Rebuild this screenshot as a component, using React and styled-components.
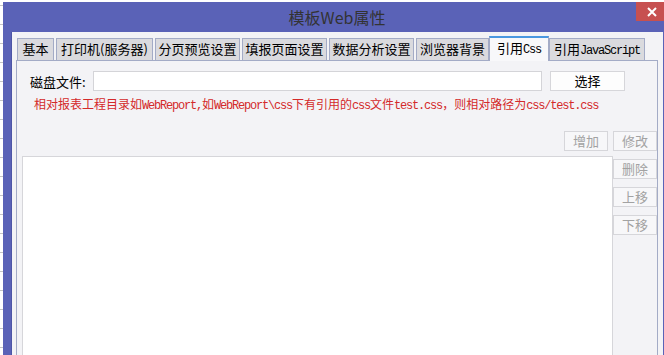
import styled, { createGlobalStyle } from 'styled-components'

const GlobalStyle = createGlobalStyle`
  html, body {
    margin: 0;
    padding: 0;
  }
  body {
    width: 664px;
    height: 355px;
    overflow: hidden;
    background: #ffffff;
    font-family: 'Noto Sans CJK SC', 'Noto Sans', sans-serif;
  }
`

const Desktop = styled.div`
  width: 664px;
  height: 355px;
  overflow: hidden;
  box-sizing: border-box;
  padding: 2px 0 0 3px;
  background: repeating-linear-gradient(
    to bottom,
    transparent 0 5px,
    #c4c4c4 5px 6px,
    transparent 6px 19px
  );
`

const Window = styled.div`
  position: relative;
  width: 668px;
  height: 370px;
  display: flex;
  flex-direction: column;
  background: #5a62b7;
`

const TitleBar = styled.div`
  height: 30px;
  line-height: 30px;
  text-align: center;
  font-size: 16px;
  color: #333;
`

const CloseButton = styled.div`
  position: absolute;
  top: 0;
  right: 4px;
  width: 31px;
  height: 19px;
  display: flex;
  align-items: center;
  justify-content: center;
  background: #c75050;
`

const Body = styled.div`
  flex: 1;
  margin: 0 8px;
  box-sizing: border-box;
  padding: 4px 5px 0 4px;
  background: #f3f3f6;
  border-left: 1px solid #4d55a6;
  display: flex;
  flex-direction: column;
`

const TabStrip = styled.div`
  height: 24px;
  display: flex;
  align-items: flex-end;
  padding-left: 1px;
`

const Tab = styled.div`
  position: relative;
  box-sizing: border-box;
  width: ${(p) => p.$w}px;
  height: ${(p) => (p.$active ? 25 : 22)}px;
  margin: ${(p) => (p.$active ? '0 0 -1px -2px' : '0 2px 0 0')};
  z-index: ${(p) => (p.$active ? 1 : 0)};
  border: 1px solid #a3abc6;
  border-bottom: none;
  border-top: ${(p) => (p.$active ? '2px solid #4a98e0' : '1px solid #a3abc6')};
  background: ${(p) => (p.$active ? '#f8f8fa' : '#dadade')};
  font-size: 13px;
  line-height: 20px;
  text-align: center;
  color: #000;
  white-space: nowrap;
`

const Mono = styled.span`
  font-family: 'Liberation Mono', 'Noto Sans CJK SC', monospace;
  font-size: 12px;
  letter-spacing: -1.2px;
`

const Panel = styled.div`
  flex: 1;
  box-sizing: border-box;
  border: 1px solid #a3abc6;
  padding: 10px 0 0 5px;
  background: #f3f3f6;
`

const FileRow = styled.div`
  display: flex;
  align-items: center;
  padding-left: 8px;
  height: 20px;
`

const Label = styled.span`
  width: 63px;
  font-size: 13px;
  color: #000;
`

const Input = styled.div`
  width: 449px;
  height: 20px;
  box-sizing: border-box;
  border: 1px solid #d4d4d8;
  background: #fff;
`

const Button = styled.div`
  box-sizing: border-box;
  width: ${(p) => p.$w || 44}px;
  height: 20px;
  margin-left: ${(p) => p.$ml || 0}px;
  border: 1px solid #d6d6da;
  background: ${(p) => (p.$disabled ? '#f7f7f9' : '#fdfdfd')};
  color: ${(p) => (p.$disabled ? '#a2a2a2' : '#000')};
  font-size: 13px;
  line-height: 18px;
  text-align: center;
`

const Hint = styled.div`
  margin-top: 5px;
  padding-left: 12px;
  height: 16px;
  line-height: 16px;
  font-size: 12px;
  color: #d42a2a;
  white-space: nowrap;
`

const ActionRow = styled.div`
  margin-top: 19px;
  display: flex;
  justify-content: flex-end;
  gap: 5px;
`

const Lower = styled.div`
  margin-top: 5px;
  display: flex;
`

const ListBox = styled.div`
  flex: 1;
  height: 220px;
  border: 1px solid #d6d6da;
  background: #fff;
`

const SideButtons = styled.div`
  width: 44px;
  padding-top: 3px;
  display: flex;
  flex-direction: column;
  gap: 8px;
`

const tabs = [
  { w: 37, label: '基本' },
  { w: 97, label: '打印机(服务器)' },
  { w: 85, label: '分页预览设置' },
  { w: 85, label: '填报页面设置' },
  { w: 85, label: '数据分析设置' },
  { w: 73, label: '浏览器背景' },
  { w: 60, label: '引用', mono: 'Css', active: true },
  { w: 96, label: '引用', mono: 'JavaScript' },
]

export default function App() {
  return (
    <>
      <GlobalStyle />
      <Desktop>
        <Window>
          <TitleBar>模板Web属性</TitleBar>
          <CloseButton>
            <svg width="10" height="10" viewBox="0 0 10 10">
              <path d="M1 1L9 9M9 1L1 9" stroke="#fff" strokeWidth="2" />
            </svg>
          </CloseButton>
          <Body>
            <TabStrip>
              {tabs.map((t, i) => (
                <Tab key={i} $w={t.w} $active={t.active}>
                  {t.label}
                  {t.mono && <Mono>{t.mono}</Mono>}
                </Tab>
              ))}
            </TabStrip>
            <Panel>
              <FileRow>
                <Label>磁盘文件:</Label>
                <Input />
                <Button $w={75} $ml={8}>选择</Button>
              </FileRow>
              <Hint>
                相对报表工程目录如<Mono>WebReport,</Mono>如<Mono>WebReport\css</Mono>下有引用的
                <Mono>css</Mono>文件<Mono>test.css</Mono>，则相对路径为<Mono>css/test.css</Mono>
              </Hint>
              <ActionRow>
                <Button $disabled>增加</Button>
                <Button $disabled>修改</Button>
              </ActionRow>
              <Lower>
                <ListBox />
                <SideButtons>
                  <Button $disabled>删除</Button>
                  <Button $disabled>上移</Button>
                  <Button $disabled>下移</Button>
                </SideButtons>
              </Lower>
            </Panel>
          </Body>
        </Window>
      </Desktop>
    </>
  )
}
